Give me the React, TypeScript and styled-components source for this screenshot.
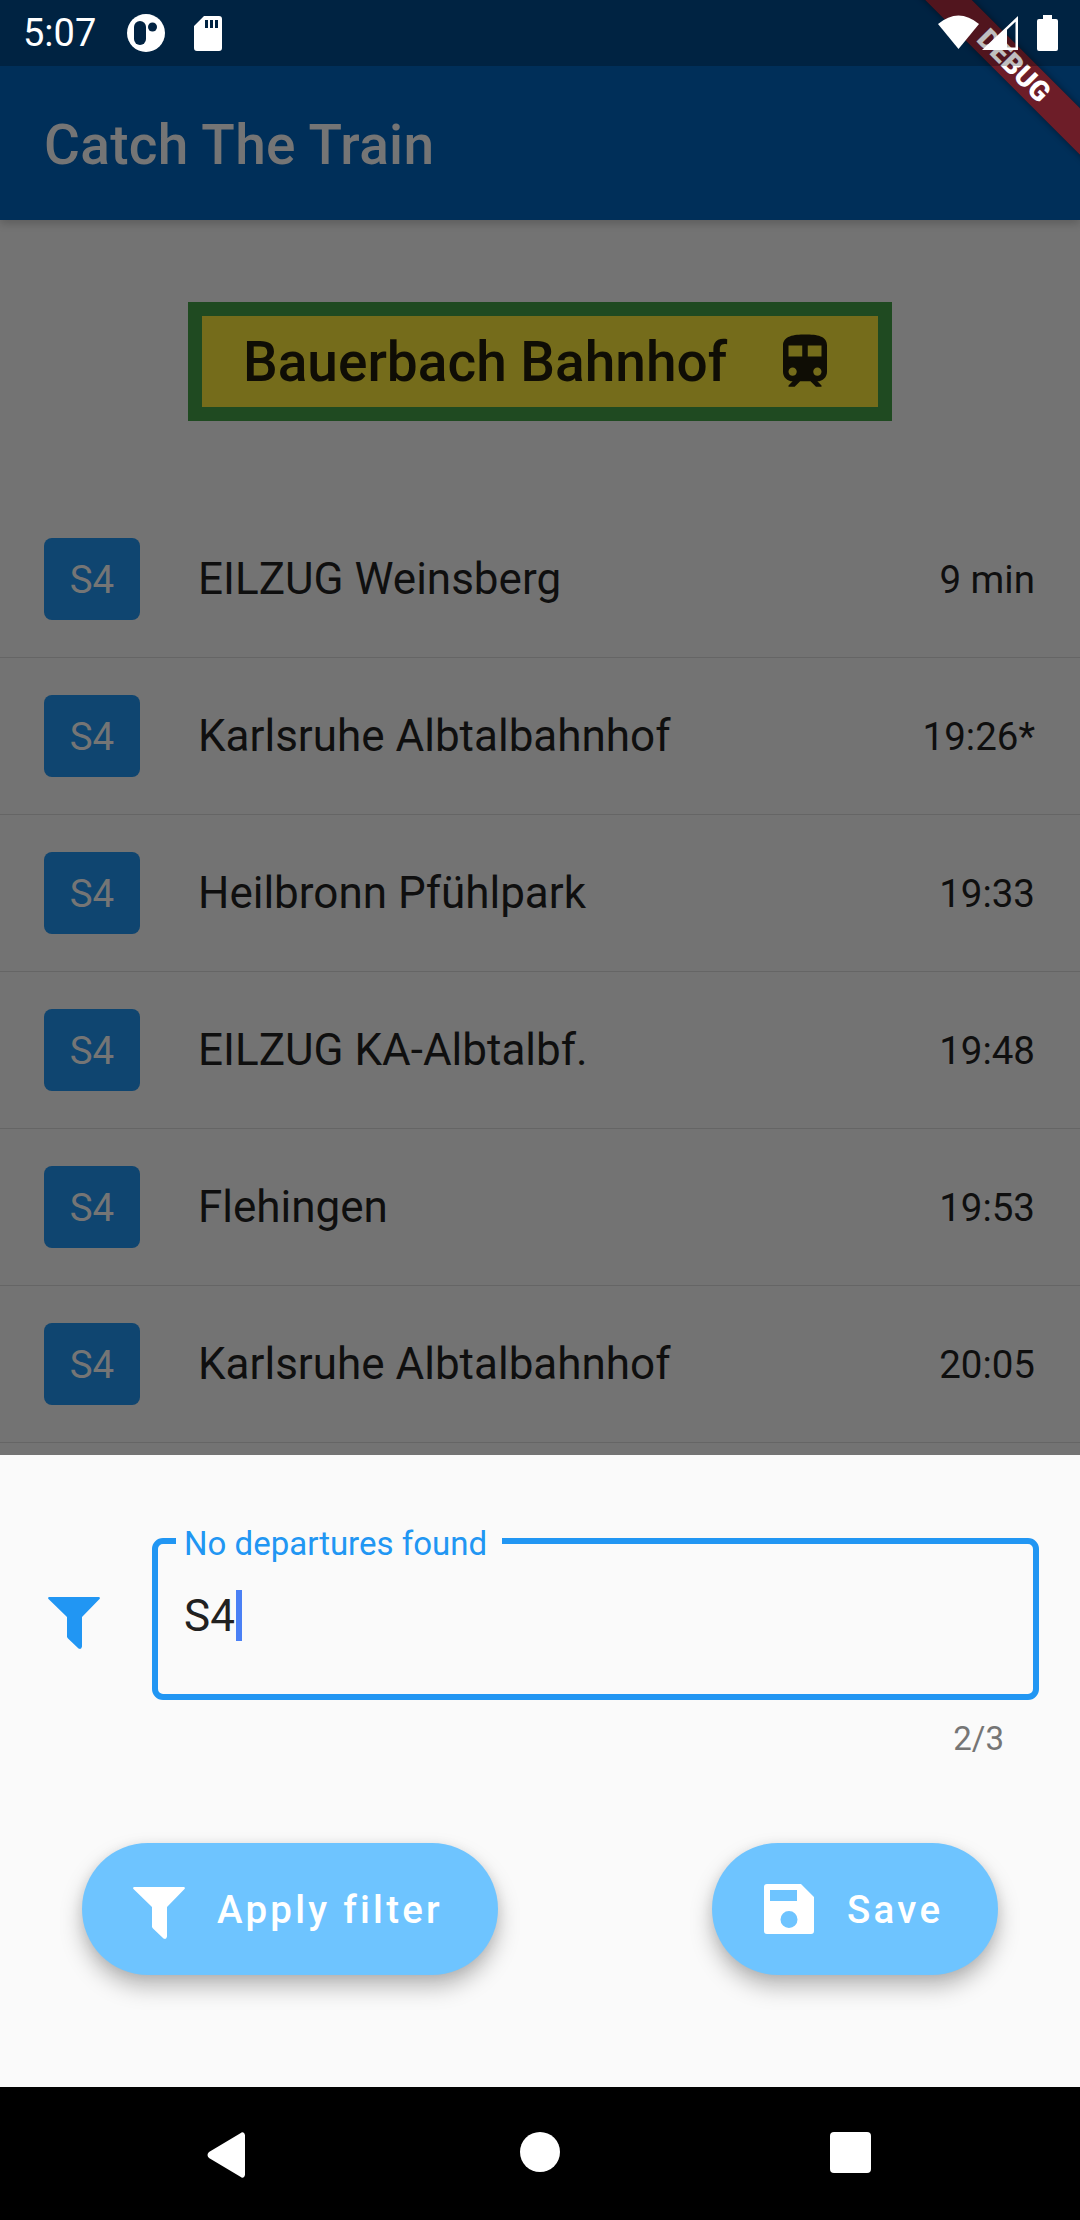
import React from "react";
import styled, { createGlobalStyle } from "styled-components";

const Global = createGlobalStyle`
  html, body { margin: 0; padding: 0; background: #000; }
  * { box-sizing: border-box; }
  body { font-family: Roboto, "Liberation Sans", sans-serif; }
`;

const Screen = styled.div`
  position: relative;
  width: 1080px;
  height: 2220px;
  overflow: hidden;
  display: flex;
  flex-direction: column;
  background: #737373;
`;

const StatusBar = styled.div`
  position: absolute;
  top: 0;
  left: 0;
  right: 0;
  z-index: 3;
  height: 66px;
  background: rgba(0, 0, 0, 0.25);
  display: flex;
  align-items: center;
  padding: 0 22px 0 23px;
  color: #fff;
`;
const Clock = styled.span`
  font-size: 38px;
  line-height: 66px;
  width: 104px;
`;
const StatusLeft = styled.div`
  display: flex;
  align-items: center;
  gap: 29px;
`;
const StatusRight = styled.div`
  margin-left: auto;
  display: flex;
  align-items: flex-start;
  height: 66px;
  padding-top: 15px;
`;
const Glyph = styled.svg`
  display: block;
  flex: none;
`;
const LoweredGlyph = styled(Glyph)`
  margin-top: 8px;
`;
const SignalGlyph = styled(Glyph)`
  margin: 1px 19px 0 3px;
`;

const AppBar = styled.header`
  height: 220px;
  flex: none;
  background: #002f59;
  display: flex;
  align-items: center;
  padding: 70px 0 0 44px;
  color: #757575;
  font-size: 55px;
  font-weight: 500;
  letter-spacing: 0.3px;
  box-shadow: 0 4px 8px rgba(0, 0, 0, 0.18);
  position: relative;
  z-index: 1;
`;

const Body = styled.main`
  height: 1235px;
  flex: none;
  overflow: hidden;
  display: flex;
  flex-direction: column;
  align-items: center;
  padding-top: 82px;
`;
const Sign = styled.div`
  width: 704px;
  height: 119px;
  flex: none;
  background: #756c1b;
  border: 14px solid #1f4a21;
  color: #0f0d05;
  display: flex;
  align-items: center;
  padding: 0 40px 0 41px;
  font-size: 55px;
  font-weight: 500;
  justify-content: space-between;
`;
const List = styled.ul`
  list-style: none;
  margin: 80px 0 0;
  padding: 0;
  width: 100%;
`;
const Row = styled.li`
  height: 157px;
  display: flex;
  align-items: center;
  padding: 0 45px 0 44px;
  border-bottom: 1px solid #656565;
`;
const Chip = styled.span`
  width: 96px;
  height: 82px;
  flex: none;
  border-radius: 8px;
  background: #0f4570;
  color: #757575;
  display: flex;
  align-items: center;
  justify-content: center;
  font-size: 38.5px;
`;
const RowTitle = styled.span`
  margin-left: 58px;
  flex: 1;
  font-size: 44px;
  color: #0f0f0f;
`;
const RowTime = styled.span`
  font-size: 38.5px;
  color: #0f0f0f;
`;

const Sheet = styled.section`
  height: 632px;
  flex: none;
  background: #fafafa;
  padding: 83px 41px 0 48px;
`;
const FieldRow = styled.div`
  display: flex;
  align-items: flex-start;
`;
const FilterSlot = styled.div`
  width: 104px;
  flex: none;
  padding-top: 59px;
`;
const Field = styled.div`
  position: relative;
  flex: 1;
  height: 162px;
  border: 6px solid #2196f3;
  border-radius: 11px;
  padding: 46px 0 0 26px;
  font-size: 44px;
  line-height: 52px;
  color: #212121;
  display: flex;
`;
const FieldLabel = styled.span`
  position: absolute;
  left: 18px;
  top: -18px;
  padding: 0 15px 0 8px;
  background: #fafafa;
  color: #2196f3;
  font-size: 33px;
  line-height: 36px;
`;
const Caret = styled.span`
  width: 6px;
  height: 51px;
  margin-left: 1px;
  background: #4a80f5;
`;
const Counter = styled.div`
  text-align: right;
  font-size: 33px;
  line-height: 40px;
  color: #757575;
  margin: 19px 35px 0 0;
`;
const Actions = styled.div`
  display: flex;
  justify-content: space-between;
  margin: 84px 41px 0 34px;
`;
const ActionButton = styled.button<{ $w: number }>`
  width: ${(p) => p.$w}px;
  height: 132px;
  border: 0;
  border-radius: 66px;
  background: #6ec4ff;
  color: #fff;
  font-family: inherit;
  font-size: 38.5px;
  font-weight: 500;
  letter-spacing: 3.25px;
  display: flex;
  align-items: center;
  padding: 0 0 0 51px;
  gap: 32px;
  box-shadow: 0 12px 22px rgba(0, 0, 0, 0.26), 0 2px 12px rgba(0, 0, 0, 0.08);
`;

const NavBar = styled.nav`
  height: 133px;
  flex: none;
  background: #000;
  display: grid;
  grid-template-columns: 207px 313px 310px auto;
  align-items: start;
  padding-top: 45px;
`;
const NavSpacer = styled.span``;

const Banner = styled.div`
  position: absolute;
  left: 814px;
  top: 49px;
  width: 400px;
  height: 33px;
  transform: rotate(45deg);
  background: rgba(176, 20, 10, 0.62);
  color: #fff;
  font-size: 28px;
  font-weight: 900;
  line-height: 33px;
  text-align: center;
  box-shadow: 0 0 7px rgba(0, 0, 0, 0.45);
  z-index: 2;
`;

const FILTER =
  "M1.5 0H50.5Q52.7 .3 51.5 2L34 20V49.5Q33.5 53 30.5 51.5L20 41.5Q19 40.5 19 39.5V20L.5 2Q-.7 .3 1.5 0Z";
const TRAIN =
  "M12 2c-4 0-8 .5-8 4v9.5C4 17.43 5.57 19 7.5 19L6 20.5v.5h2.23l2-2H14l2 2h2v-.5L16.5 19c1.93 0 3.5-1.57 3.5-3.5V6c0-3.5-3.58-4-8-4zM7.5 17c-.83 0-1.5-.67-1.5-1.5S6.67 14 7.5 14s1.5.67 1.5 1.5S8.33 17 7.5 17zm3.5-7H6V6h5v4zm2 0V6h5v4h-5zm3.5 7c-.83 0-1.5-.67-1.5-1.5s.67-1.5 1.5-1.5 1.5.67 1.5 1.5-.67 1.5-1.5 1.5z";
const SAVE =
  "M3 0H37L50 13V47Q50 50 47 50H3Q0 50 0 47V3Q0 0 3 0ZM6 6V17H33V6ZM25 27A8.5 8.5 0 1 0 25 44A8.5 8.5 0 1 0 25 27Z";

const rows: [string, string][] = [
  ["EILZUG Weinsberg", "9 min"],
  ["Karlsruhe Albtalbahnhof", "19:26*"],
  ["Heilbronn Pfühlpark", "19:33"],
  ["EILZUG KA-Albtalbf.", "19:48"],
  ["Flehingen", "19:53"],
  ["Karlsruhe Albtalbahnhof", "20:05"],
];

export default function App() {
  return (
    <Screen>
      <Global />
      <StatusBar>
        <Clock>5:07</Clock>
        <StatusLeft>
          <Glyph width="38" height="38" viewBox="0 0 38 38">
            <circle cx="19" cy="19" r="19" fill="#fff" />
            <rect x="7" y="7" width="12" height="24" rx="6" fill="#012342" />
            <circle cx="25.5" cy="13" r="4.500" fill="#012342" />
          </Glyph>
          <Glyph width="28" height="35" viewBox="0 0 28 35">
            <path
              d="M10 0H25Q28 0 28 3V32Q28 35 25 35H3Q0 35 0 32V10ZM11 4V12H14V4ZM16 4V12H19V4ZM21 4V12H24V4Z"
              fill="#fff"
              fillRule="evenodd"
            />
          </Glyph>
        </StatusLeft>
        <StatusRight>
          <Glyph width="41" height="34" viewBox="0 0 41 34">
            <path d="M20.500 34L0 9Q20.500 -8 41 9Z" fill="#fff" />
          </Glyph>
          <SignalGlyph width="36" height="34" viewBox="0 0 36 34">
            <path d="M0 34L25 10.500V34Z" fill="#fff" />
            <path d="M36 0V34H25V31.500H33.500V5.800L25 13.800V10.500Z" fill="#fff" />
          </SignalGlyph>
          <Glyph width="21" height="36" viewBox="0 0 21 36">
            <path d="M6 0H15V4H19Q21 4 21 6V34Q21 36 19 36H2Q0 36 0 34V6Q0 4 2 4H6Z" fill="#fff" />
          </Glyph>
        </StatusRight>
      </StatusBar>
      <AppBar>Catch The Train</AppBar>
      <Body>
        <Sign>
          <span>Bauerbach Bahnhof</span>
          <Glyph width="66" height="66" viewBox="0 0 24 24">
            <path d={TRAIN} fill="#0f0d05" />
          </Glyph>
        </Sign>
        <List>
          {rows.map(([name, time], i) => (
            <Row key={i}>
              <Chip>S4</Chip>
              <RowTitle>{name}</RowTitle>
              <RowTime>{time}</RowTime>
            </Row>
          ))}
        </List>
      </Body>
      <Sheet>
        <FieldRow>
          <FilterSlot>
            <Glyph width="52" height="52" viewBox="0 0 52 52">
              <path d={FILTER} fill="#2196f3" />
            </Glyph>
          </FilterSlot>
          <Field>
            <FieldLabel>No departures found</FieldLabel>
            S4
            <Caret />
          </Field>
        </FieldRow>
        <Counter>2/3</Counter>
        <Actions>
          <ActionButton $w={416}>
            <LoweredGlyph width="52" height="52" viewBox="0 0 52 52">
              <path d={FILTER} fill="#fff" />
            </LoweredGlyph>
            Apply filter
          </ActionButton>
          <ActionButton $w={286}>
            <Glyph width="52" height="50" viewBox="0 0 52 50">
              <path d={SAVE} fill="#fff" fillRule="evenodd" transform="translate(1 0)" />
            </Glyph>
            Save
          </ActionButton>
        </Actions>
      </Sheet>
      <NavBar>
        <NavSpacer />
        <Glyph width="38" height="46" viewBox="0 0 38 46">
          <path d="M33 1.500Q37 -1.500 38 3V43Q37 47.500 33 44.500L2 26Q-1 23 2 20Z" fill="#fff" />
        </Glyph>
        <Glyph width="40" height="40" viewBox="0 0 40 40">
          <circle cx="20" cy="20" r="20" fill="#fff" />
        </Glyph>
        <Glyph width="41" height="41" viewBox="0 0 41 41">
          <rect width="41" height="41" rx="4" fill="#fff" />
        </Glyph>
      </NavBar>
      <Banner>DEBUG</Banner>
    </Screen>
  );
}
